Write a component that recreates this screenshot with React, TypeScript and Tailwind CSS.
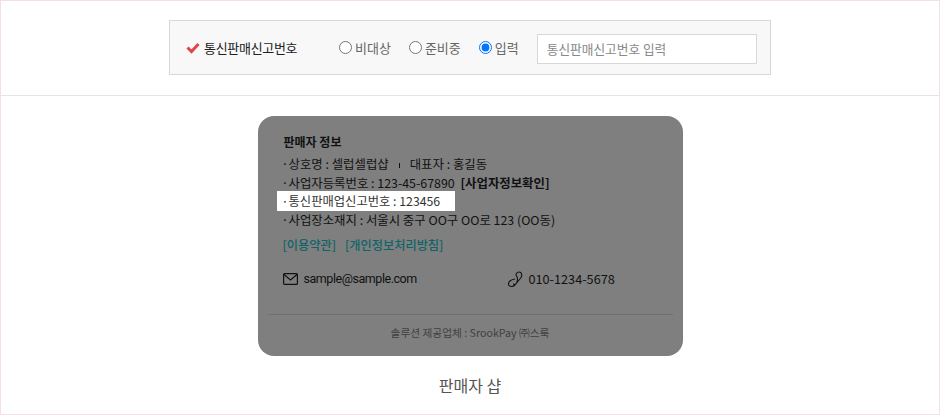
import type { ReactNode } from "react";

const kr = { fontFamily: '"Noto Sans CJK KR", "Noto Sans", sans-serif' };

function RadioItem({ label, checked }: { label: string; checked?: boolean }) {
  return (
    <label className="flex items-center gap-[3px] text-[13px] text-[#666]">
      <input
        type="radio"
        name="telecom"
        defaultChecked={checked}
        className="m-0 h-[13px] w-[13px] accent-[#0075ff]"
      />
      {label}
    </label>
  );
}

function Dot() {
  return <span className="-ml-[1px] inline-block w-[7px]">·</span>;
}

function InfoLine({ children }: { children: ReactNode }) {
  return <p className="h-[19px] whitespace-nowrap text-[12.4px] leading-[19px] text-[#111]">{children}</p>;
}

export default function App() {
  return (
    <div style={kr} className="h-[415px] w-[940px] overflow-hidden border border-[#f5dfe6] bg-white">
      <div className="flex h-[95px] justify-center border-b border-[#e8e4e6] pt-[19px]">
        <div className="flex h-[55px] w-[602px] items-center border border-[#d8d8d8] bg-[#f8f8f8] pl-[16px]">
          <svg width="14" height="12" viewBox="0 0 14 12" fill="none" stroke="#e04646" strokeWidth="3">
            <path d="M1.5 5.5 L5.5 9.5 L12.5 2" />
          </svg>
          <span className="ml-[4px] w-[135px] text-[13px] tracking-[-0.3px] text-[#222]">
            통신판매신고번호
          </span>
          <div className="flex items-center gap-[18px]">
            <RadioItem label="비대상" />
            <RadioItem label="준비중" />
            <RadioItem label="입력" checked />
          </div>
          <input
            placeholder="통신판매신고번호 입력"
            className="ml-[18px] mt-[2px] h-[30px] w-[220px] border border-[#d8d8d8] bg-white px-[9px] text-[12.7px] outline-none placeholder:text-[#888]"
          />
        </div>
      </div>

      <div className="flex flex-col items-center pt-[20px]">
        <div className="h-[240px] w-[425px] rounded-[16px] bg-[#7f7f7f] pt-[17px]">
          <div className="px-[25px]">
            <h4 className="mb-[4px] ml-[1px] text-[12px] font-bold leading-[18px] text-[#111]">판매자 정보</h4>
            <InfoLine>
              <Dot />상호명 : 셀럽셀럽샵
              <span className="mx-[10px] inline-block h-[5px] w-px bg-[#111] align-middle" />
              대표자 : 홍길동
            </InfoLine>
            <InfoLine>
              <Dot />사업자등록번호 : 123-45-67890 <span className="ml-[3px] font-bold">[사업자정보확인]</span>
            </InfoLine>
            <div className="-mx-[6px] -mt-[2px] h-[20px] w-[178px] whitespace-nowrap bg-white pl-[6px] text-[12.3px] leading-[21px] text-[#333]">
              <Dot />통신판매업신고번호 : 123456
            </div>
            <InfoLine>
              <Dot />사업장소재지 : 서울시 중구 OO구 OO로 123 (OO동)
            </InfoLine>
            <div className="mt-[6px] flex gap-[9px] text-[12.2px] font-medium leading-[18px] text-[#0e6468]">
              <span>[이용약관]</span>
              <span>[개인정보처리방침]</span>
            </div>
            <div className="mt-[15px] flex items-center text-[13px] leading-[20px] text-[#111]">
              <div className="flex w-[224px] items-center gap-[6px]">
                <svg width="15" height="12" viewBox="0 0 15 12" fill="none" stroke="currentColor" strokeWidth="1.2">
                  <rect x="0.6" y="0.6" width="13.8" height="10.8" rx="1" />
                  <path d="M1 1.5 L7.5 7 L14 1.5" />
                </svg>
                <span style={{ fontFamily: "Roboto, sans-serif" }} className="text-[12.5px] tracking-[-0.45px]">
                  sample@sample.com
                </span>
              </div>
              <div className="flex items-center gap-[4px]">
                <svg width="18" height="18" viewBox="0 0 18 18" fill="none" stroke="currentColor" strokeWidth="1.1">
                  <path d="M8 9 C4.5 9.5 1 11.5 1.5 14.5 C2 17 6 17 8 15 L13.7 8 C15.5 5.5 15 2 12 2 C9.5 2 8.5 4.5 9.5 6 C11 8.5 11 10.5 9.5 13 C8.5 15 6.5 15 6.5 13.5" />
                </svg>
                <span className="text-[12.7px]">010-1234-5678</span>
              </div>
            </div>
          </div>
          <div className="mx-[10px] mt-[25px] border-t border-[#6f6f6f] pt-[9px] text-center text-[10.7px] leading-[18px] text-[#3f3f3f]">
            솔루션 제공업체 : SrookPay ㈜스룩
          </div>
        </div>
        <p className="mt-[18px] text-[16px] leading-[22px] text-[#555]">판매자 샵</p>
      </div>
    </div>
  );
}
